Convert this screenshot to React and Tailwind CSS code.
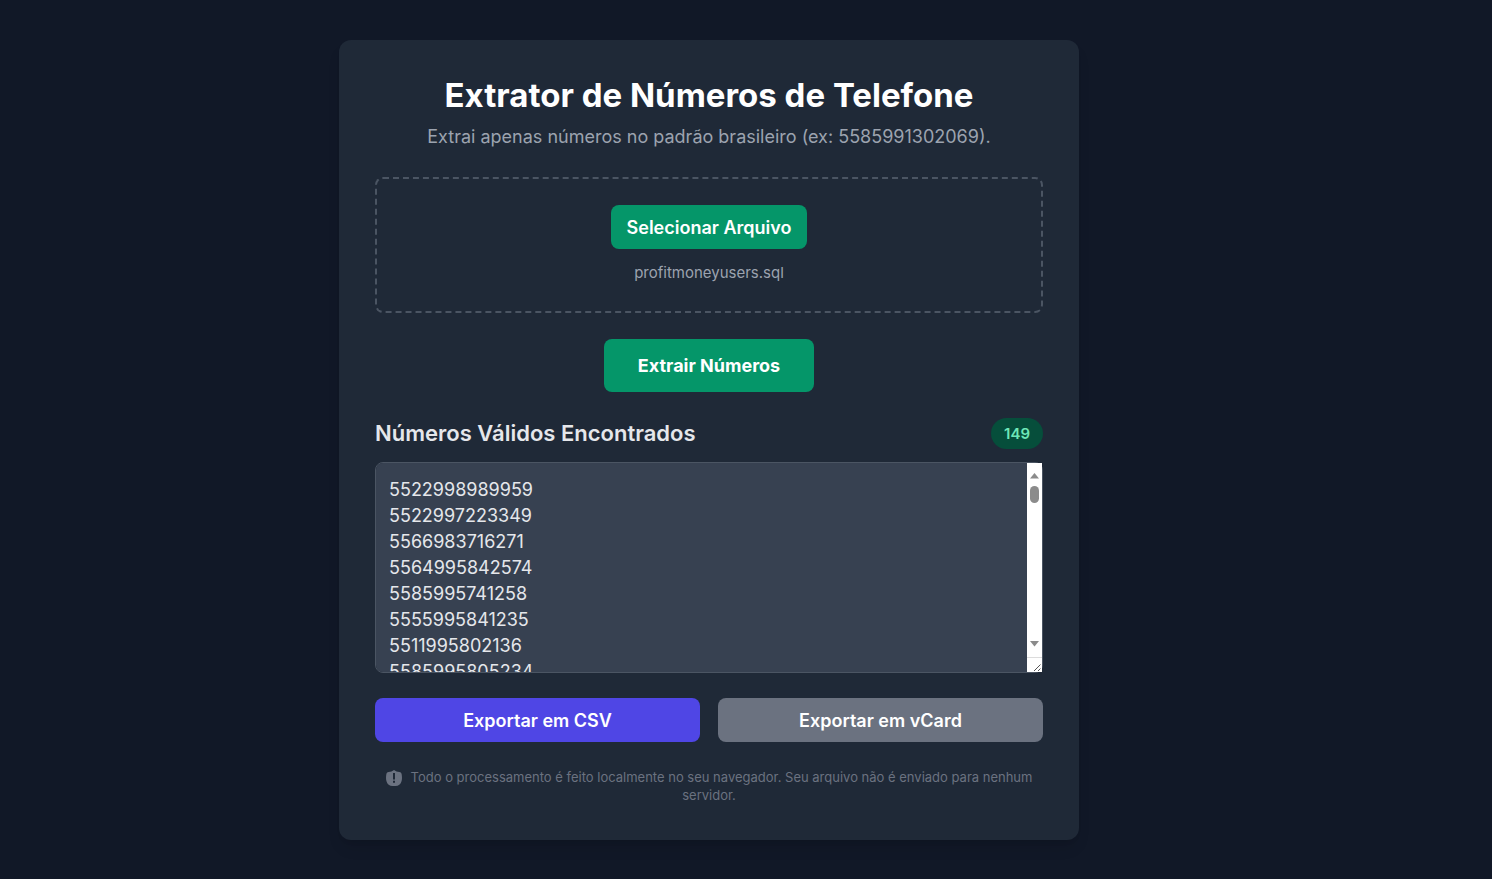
import React, { useRef, useState } from "react";

const initialNumbers = [
  "5522998989959",
  "5522997223349",
  "5566983716271",
  "5564995842574",
  "5585995741258",
  "5555995841235",
  "5511995802136",
  "5585995805234",
];

const PHONE_REGEX = /55\d{2}9\d{8}/g;

function download(content, fileName, type) {
  const url = URL.createObjectURL(new Blob([content], { type }));
  const link = document.createElement("a");
  link.href = url;
  link.download = fileName;
  link.click();
  URL.revokeObjectURL(url);
}

function ShieldIcon() {
  return (
    <svg
      className="mr-[9px] inline-block size-4 align-[-4px]"
      viewBox="0 0 16 16"
      fill="currentColor"
      aria-hidden="true"
    >
      <path
        fillRule="evenodd"
        d="M8 0 C9.6 1.2 11.4 1.9 13.4 2.1 C14.8 2.3 15.5 3.2 15.7 4.6 C16.1 7 16.1 9 15.6 11 C14.8 14.2 12.4 16 9.4 16 H6.6 C3.6 16 1.2 14.2 0.4 11 C-0.1 9 -0.1 7 0.3 4.6 C0.5 3.2 1.2 2.3 2.6 2.1 C4.6 1.9 6.4 1.2 8 0 Z M7 3 V9.4 H9 V3 Z M7 10.8 V12.8 H9 V10.8 Z"
      />
    </svg>
  );
}

// Light scrollbar and resize corner over the right edge of the list
function ScrollTrack() {
  return (
    <div
      aria-hidden="true"
      className="pointer-events-none absolute inset-y-px right-px flex w-[15px] flex-col items-center bg-white text-[#8b8b8b]"
    >
      <svg className="mt-2.5 h-[6px] w-[9px]" viewBox="0 0 9 6" fill="currentColor">
        <path d="M4.5 0 L9 5.5 H0 Z" />
      </svg>
      <div className="mt-[7px] h-[17px] w-[9px] rounded-full bg-[#8b8b8b]" />
      <svg className="mt-auto mb-2.5 h-[6px] w-[9px]" viewBox="0 0 9 6" fill="currentColor">
        <path d="M0 0 H9 L4.5 5.5 Z" />
      </svg>
      <div className="h-[15px] w-full border-t border-[#dcdcdc]">
        <svg className="size-[15px]" viewBox="0 0 15 15" fill="none" stroke="#555555">
          <path d="M7 13 L13.5 6.5 M11 13 L13.5 10.5" />
        </svg>
      </div>
    </div>
  );
}

export default function App() {
  const fileInput = useRef(null);
  const [file, setFile] = useState(null);
  const [numbers, setNumbers] = useState(initialNumbers);
  const [count, setCount] = useState(149);

  const handleExtract = async () => {
    if (!file) return;
    const text = await file.text();
    const found = [...new Set(text.match(PHONE_REGEX) || [])];
    setNumbers(found);
    setCount(found.length);
  };

  const exportCsv = () => {
    download(["telefone", ...numbers].join("\n"), "numeros.csv", "text/csv");
  };

  const exportVcard = () => {
    const cards = numbers.map(
      (n, i) => `BEGIN:VCARD\nVERSION:3.0\nFN:Contato ${i + 1}\nTEL:+${n}\nEND:VCARD`
    );
    download(cards.join("\n"), "contatos.vcf", "text/vcard");
  };

  return (
    <div className="flex min-h-screen items-start justify-center bg-[#111827] pt-10 pr-[74px] pb-9 font-['Inter',sans-serif] text-[18px] text-[#e5e7eb]">
      <main className="w-full max-w-[740px] rounded-xl bg-[#1f2937] p-9 shadow-lg">
        <header className="mb-[27px] text-center">
          <h1 className="text-[33px] leading-[38px] font-bold text-white">
            Extrator de Números de Telefone
          </h1>
          <p className="mt-2.5 leading-[26px] text-[#9ca3af]">
            Extrai apenas números no padrão brasileiro (ex: 5585991302069).
          </p>
        </header>

        <div className="mb-[26px] rounded-lg border-2 border-dashed border-[#4b5563] p-[26px] text-center">
          <input
            ref={fileInput}
            type="file"
            className="hidden"
            aria-label="Selecionar Arquivo"
            onChange={(e) => setFile(e.target.files[0])}
          />
          <button
            onClick={() => fileInput.current.click()}
            className="h-11 rounded-lg bg-[#059669] px-4 font-semibold text-white hover:bg-[#047857]"
          >
            Selecionar Arquivo
          </button>
          <p className="mt-3 text-[15px] leading-6 text-[#9ca3af]">
            {file ? file.name : "profitmoneyusers.sql"}
          </p>
        </div>

        <div className="mb-[26px] text-center">
          <button
            onClick={handleExtract}
            className="h-[53px] rounded-lg bg-[#059669] px-[34px] font-bold text-white hover:bg-[#047857]"
          >
            Extrair Números
          </button>
        </div>

        <section>
          <div className="mb-[13px] flex items-center justify-between">
            <h2 className="text-[22px] leading-[31px] font-semibold">
              <label htmlFor="numbers">Números Válidos Encontrados</label>
            </h2>
            <span className="rounded-full bg-[#064e3b] px-[13px] text-[15px] leading-[31px] font-semibold text-[#6ee7b7]">
              {count}
            </span>
          </div>
          <div className="relative">
            <textarea
              id="numbers"
              readOnly
              value={numbers.join("\n")}
              className="block h-[211px] w-full resize-y overflow-y-scroll rounded-lg border border-[#4b5563] bg-[#374151] px-[13px] py-3.5 leading-[26px]"
            />
            <ScrollTrack />
          </div>
          <div className="mt-[25px] grid grid-cols-2 gap-[18px]">
            <button
              onClick={exportCsv}
              className="h-11 rounded-lg bg-[#4f46e5] font-semibold text-white hover:bg-[#4338ca]"
            >
              Exportar em CSV
            </button>
            <button
              onClick={exportVcard}
              className="h-11 rounded-lg bg-[#6b7280] font-semibold text-white hover:bg-[#4b5563]"
            >
              Exportar em vCard
            </button>
          </div>
        </section>

        <footer className="mt-[26px] text-center text-[13px] leading-[18px] text-[#6b7280]">
          <ShieldIcon />
          Todo o processamento é feito localmente no seu navegador. Seu arquivo não é enviado para
          nenhum servidor.
        </footer>
      </main>
    </div>
  );
}
